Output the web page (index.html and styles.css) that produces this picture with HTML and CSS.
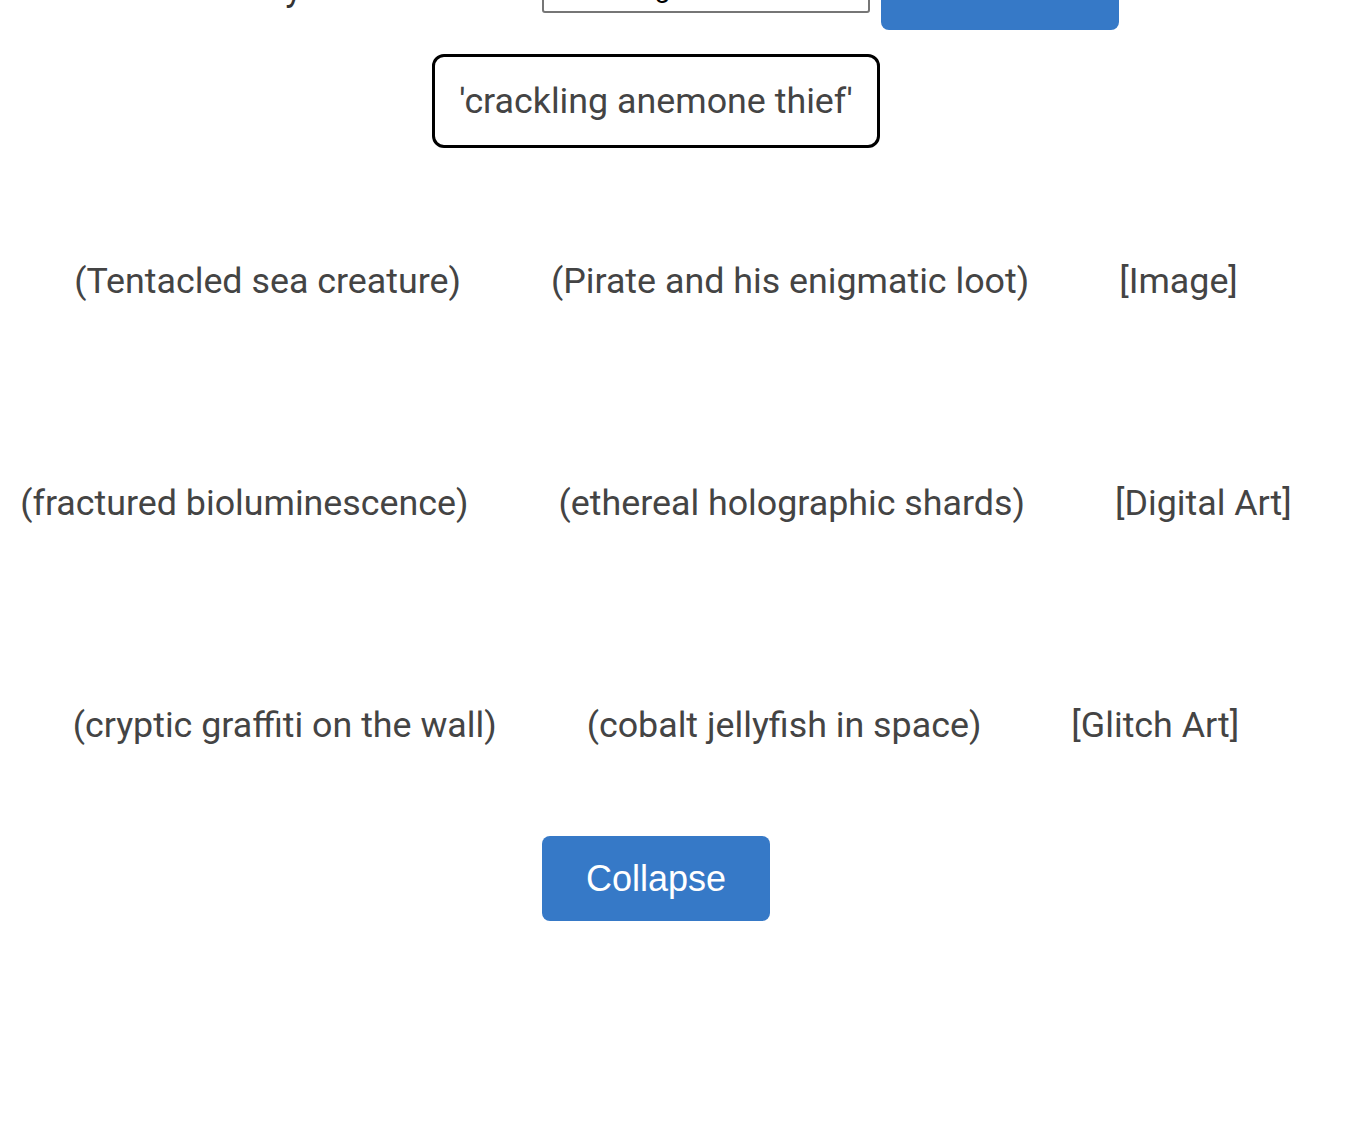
FILE: index.html
```html
<!DOCTYPE html>
<html lang="en">
<head>
<meta charset="utf-8">
<title>Prompt Remix</title>
<link rel="stylesheet" href="styles.css">
</head>
<body>
<div class="page">
  <div class="form-row">
    <label class="label" for="q">Enter your word here:</label>
    <input id="q" class="field" type="text" value="crackling anemone thief">
    <button class="btn" type="button">Generate</button>
  </div>
  <div class="quote-wrap">
    <div class="quote">'crackling anemone thief'</div>
  </div>
  <div class="grid">
    <div class="row">
      <span class="cell">(Tentacled sea creature)</span>
      <span class="cell">(Pirate and his enigmatic loot)</span>
      <span class="cell">[Image]</span>
    </div>
    <div class="row">
      <span class="cell">(fractured bioluminescence)</span>
      <span class="cell">(ethereal holographic shards)</span>
      <span class="cell">[Digital Art]</span>
    </div>
    <div class="row">
      <span class="cell">(cryptic graffiti on the wall)</span>
      <span class="cell">(cobalt jellyfish in space)</span>
      <span class="cell">[Glitch Art]</span>
    </div>
  </div>
  <div class="actions">
    <button class="btn" type="button">Collapse</button>
  </div>
</div>
</body>
</html>
```

FILE: styles.css
```css
html, body {
  margin: 0;
  padding: 0;
  background: #ffffff;
}

body {
  font-family: Roboto, "Noto Sans", sans-serif;
}

.page {
  margin-top: -55px;
  padding-right: 60px;
}

.form-row {
  display: flex;
  justify-content: center;
  align-items: center;
  gap: 11px;
  height: 85px;
}

.label {
  font-size: 36px;
  line-height: 42px;
  color: #333333;
  white-space: nowrap;
}

.field {
  box-sizing: border-box;
  width: 328px;
  height: 51px;
  padding: 7px 14px;
  border: 2px solid #767676;
  border-radius: 3px;
  font-family: Roboto, sans-serif;
  font-size: 28px;
  color: #000000;
  background: #ffffff;
}

.btn {
  font-family: "Liberation Sans", Arial, sans-serif;
  font-size: 36px;
  line-height: 41px;
  color: #ffffff;
  background: #3679c7;
  border: 0;
  border-radius: 8px;
  padding: 22px 44px;
  cursor: pointer;
}

.quote-wrap {
  display: flex;
  justify-content: center;
  margin-top: 24px;
}

.quote {
  border: 3px solid #000000;
  border-radius: 12px;
  padding: 23px 24px;
  font-size: 35.8px;
  line-height: 42px;
  color: #444444;
  white-space: nowrap;
}

.grid {
  margin-top: 22px;
}

.row {
  display: flex;
  justify-content: center;
  gap: 90px;
  padding: 90px 0;
  font-size: 35.8px;
  line-height: 42px;
  color: #444444;
  white-space: nowrap;
}

.actions {
  display: flex;
  justify-content: center;
}
```
